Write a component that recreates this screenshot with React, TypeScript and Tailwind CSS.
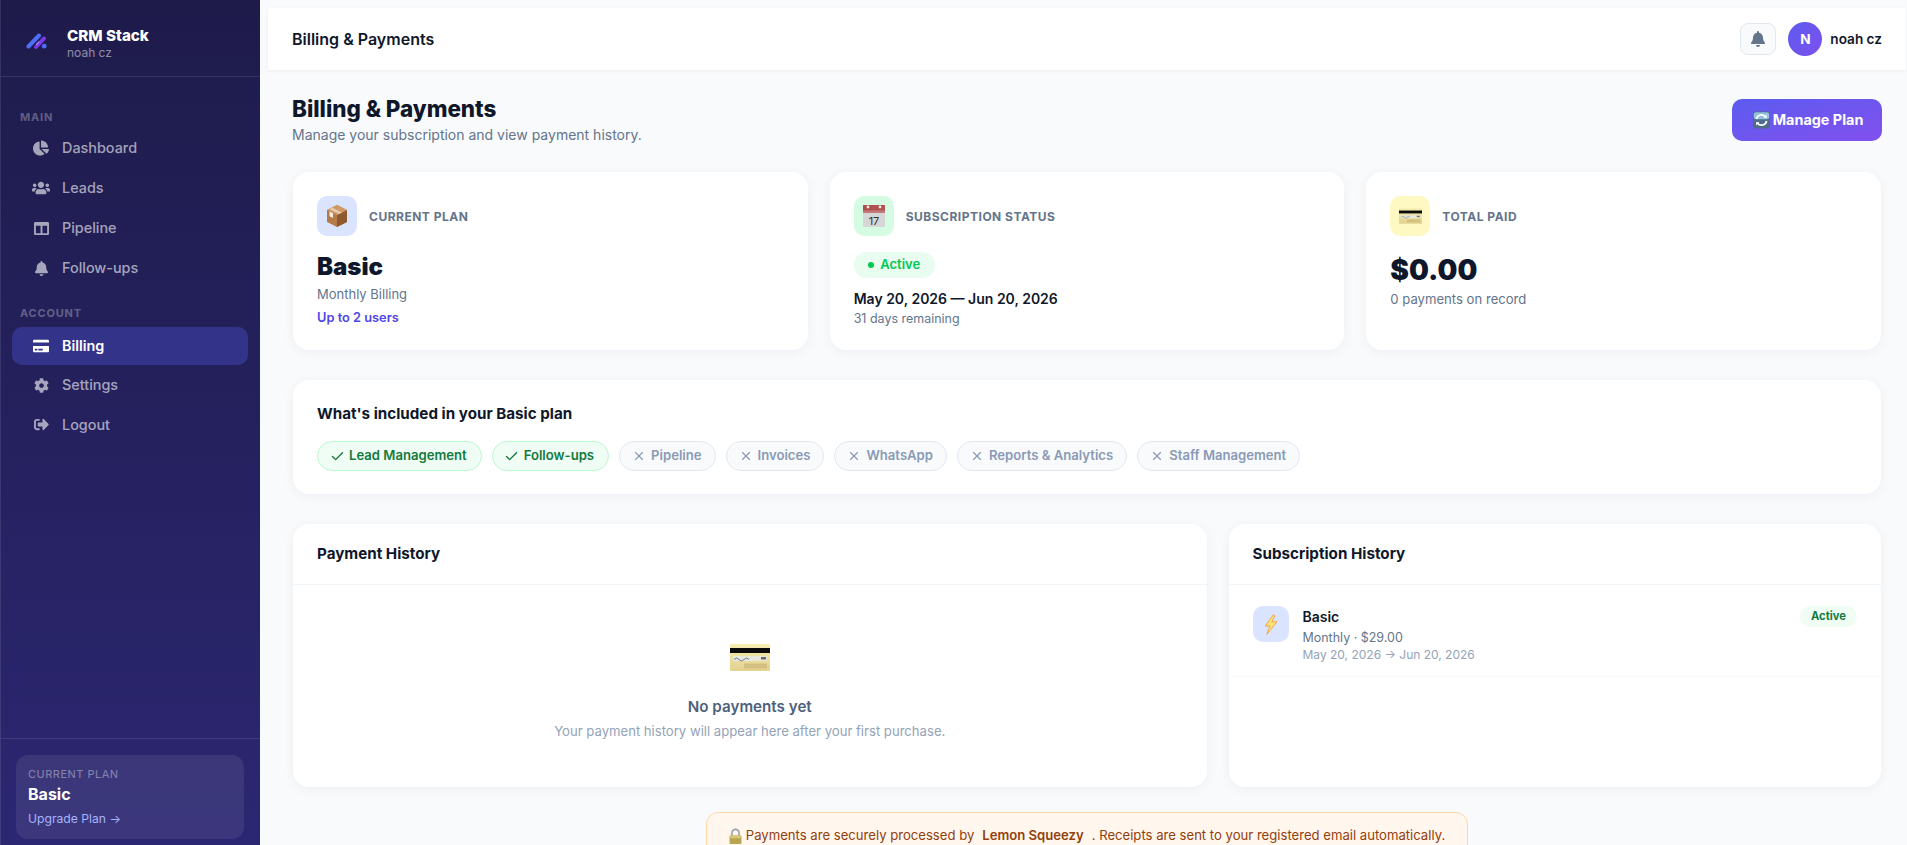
import React from "react";
import { Check, X } from "lucide-react";
import { FaChartPie, FaUsers, FaColumns, FaBell, FaCreditCard, FaCog, FaSignOutAlt } from "react-icons/fa";

const Logo = () => (
  <svg width="21" height="18" viewBox="0 0 21 18" className="shrink-0">
    <path d="M2.5 14.5 L13 3.5" stroke="#4f6ef7" strokeWidth="4" strokeLinecap="round" fill="none" />
    <path d="M10 15 L18 6.5" stroke="#7c3aed" strokeWidth="4" strokeLinecap="round" fill="none" />
    <path d="M10.5 12.5 L13 9.8" stroke="#a78bfa" strokeWidth="1.2" strokeLinecap="round" fill="none" />
    <circle cx="18.2" cy="14.2" r="2.4" fill="#4f6ef7" />
  </svg>
);

const PackageEmoji = () => (
  <svg width="22" height="24" viewBox="0 0 22 24">
    <path d="M11 1 L21 6 V18 L11 23 L1 18 V6 Z" fill="#b57a48" />
    <path d="M11 11 L21 6 V18 L11 23 Z" fill="#8f5a30" />
    <path d="M1 6 L11 1 L21 6 L11 11 Z" fill="#cf9a68" />
    <path d="M6 3.5 L16 8.5 L13 10 L3 5 Z" fill="#e5c9a8" />
    <path d="M3.5 7.5 L7 9.3 V14 L3.5 12.2 Z" fill="#f2ece2" />
  </svg>
);

const CalendarEmoji = () => (
  <svg width="22" height="24" viewBox="0 0 22 24">
    <rect x="0" y="8" width="22" height="15" fill="#d6d6d6" />
    <rect x="0" y="1" width="22" height="8" fill="#b0504f" />
    <rect x="0" y="6.5" width="22" height="2.5" fill="#c27a78" />
    <circle cx="5" cy="3" r="1.4" fill="#e8efe8" />
    <circle cx="17" cy="3" r="1.4" fill="#e8efe8" />
    <text x="11" y="20.5" textAnchor="middle" fontSize="11" fontFamily="Inter, sans-serif" fill="#333">17</text>
  </svg>
);

const CardEmoji = ({ w = 23, h = 16 }: { w?: number; h?: number }) => (
  <svg width={w} height={h} viewBox="0 0 40 27">
    <defs>
      <linearGradient id="cardg" x1="0" y1="0" x2="0" y2="1">
        <stop offset="0" stopColor="#f6eeb0" />
        <stop offset="1" stopColor="#e2d190" />
      </linearGradient>
    </defs>
    <rect x="0" y="0" width="40" height="27" rx="1.5" fill="url(#cardg)" />
    <rect x="0" y="4" width="40" height="5" fill="#0a0a0a" />
    <rect x="3" y="12" width="34" height="5" fill="#e9e6da" />
    <path d="M4 15.5 q3 -3 5 0 t5 0 t5 0" stroke="#5a73a8" strokeWidth="0.9" fill="none" />
    <rect x="31" y="13" width="5" height="2.5" fill="#6a6a6a" />
    <rect x="14" y="19.5" width="23" height="5" fill="#d3bf80" />
  </svg>
);

const BoltEmoji = () => (
  <svg width="14" height="21" viewBox="0 0 14 21">
    <path d="M9.5 0.6 L1.2 12 H5.8 L2.8 20.4 L13 7.8 H7.8 L11 2 Z" fill="#ffe27a" stroke="#f59f3a" strokeWidth="0.9" strokeLinejoin="round" />
  </svg>
);

const LockEmoji = () => (
  <svg width="13" height="17" viewBox="0 0 12 15" className="shrink-0">
    <path d="M2.7 7 V4.2 a3.3 3.3 0 0 1 6.6 0 V7" fill="none" stroke="#9aa0a6" strokeWidth="1.5" />
    <rect x="0.5" y="6.5" width="11" height="8" rx="1" fill="#b9a452" />
    <rect x="0.5" y="6.5" width="11" height="2.5" rx="1" fill="#d4c67c" />
  </svg>
);

const SyncEmoji = () => (
  <svg width="17" height="18" viewBox="0 0 17 18" className="shrink-0">
    <rect x="0" y="0.5" width="17" height="17" rx="2.5" fill="#4f6b8a" />
    <rect x="0.8" y="1.3" width="15.4" height="7" rx="2" fill="#8fc1dc" />
    <path d="M3.4 8 a5.2 5.2 0 0 1 9 -2.4" stroke="#fff" strokeWidth="1.7" fill="none" />
    <path d="M10.6 6.8 L14 7 L13.6 3.4 Z" fill="#fff" />
    <path d="M13.6 10 a5.2 5.2 0 0 1 -9 2.4" stroke="#fff" strokeWidth="1.7" fill="none" />
    <path d="M6.4 11.2 L3 11 L3.4 14.6 Z" fill="#fff" />
  </svg>
);

const NavItem = ({ icon, label, active }: { icon: React.ReactNode; label: string; active?: boolean }) => (
  <div className={`ml-[11px] mr-3 flex h-[38px] items-center rounded-[10px] pl-[18px] ${active ? "bg-[#34338a] text-white font-semibold" : "text-white/60 font-medium"}`}>
    <span className="flex w-[22px] justify-center">{icon}</span>
    <span className="ml-[10px] text-[14.4px]">{label}</span>
  </div>
);

const StatCard = ({ iconBg, icon, label, children }: { iconBg: string; icon: React.ReactNode; label: string; children: React.ReactNode }) => (
  <div className="h-[178px] rounded-2xl bg-white p-6 shadow-[0_2px_12px_rgba(15,23,42,0.05)]">
    <div className="flex items-center gap-3">
      <div className={`flex h-10 w-10 items-center justify-center rounded-[10px] ${iconBg}`}>{icon}</div>
      <div className="pt-px text-[12px] font-bold uppercase tracking-[0.5px] text-[#64748b]">{label}</div>
    </div>
    {children}
  </div>
);

const Chip = ({ on, label }: { on?: boolean; label: string }) => (
  <div className={`flex h-[30px] items-center rounded-full border text-[13.12px] font-semibold ${on ? "gap-[4.5px] border-[#bbf7d0] bg-[#f0fdf4] pr-[14px] pl-[11.5px] text-[#137a3c]" : "gap-[5px] border-[#e2e8f0] bg-[#f8fafc] pr-[13px] pl-[12px] text-[#8a9ab5]"}`}>
    {on ? <Check size={15} strokeWidth={2.2} /> : <X size={14} strokeWidth={2} />}
    <span>{label}</span>
  </div>
);

export default function App() {
  return (
    <div className="flex h-screen overflow-hidden bg-[#f8fafc] font-['Inter',sans-serif]">
      <aside className="flex h-full w-[260px] shrink-0 flex-col border-l border-white/10 bg-gradient-to-b from-[#1e1b4b] to-[#2c2772]">
        <div className="flex h-[77px] items-center gap-[20px] border-b border-white/10 pt-[6px] pl-[25px]">
          <Logo />
          <div className="pt-[5px]">
            <div className="text-[15.2px] leading-[18px] font-extrabold text-white">CRM Stack</div>
            <div className="text-[12px] leading-[15px] text-white/50">noah cz</div>
          </div>
        </div>
        <div className="mt-[33px] mb-[5px] pl-[19px] text-[11px] leading-[14px] font-bold tracking-[0.8px] text-white/30">MAIN</div>
        <div className="flex flex-col gap-[2px]">
          <NavItem icon={<FaChartPie size={16} />} label="Dashboard" />
          <NavItem icon={<FaUsers size={18} />} label="Leads" />
          <NavItem icon={<FaColumns size={15} />} label="Pipeline" />
          <NavItem icon={<FaBell size={15} />} label="Follow-ups" />
        </div>
        <div className="mt-[19px] mb-[6.5px] pl-[19px] text-[11px] leading-[14px] font-bold tracking-[0.8px] text-white/30">ACCOUNT</div>
        <div className="flex flex-col gap-[1.5px]">
          <NavItem active icon={<FaCreditCard size={16} />} label="Billing" />
          <NavItem icon={<FaCog size={15} />} label="Settings" />
          <NavItem icon={<FaSignOutAlt size={15} />} label="Logout" />
        </div>
        <div className="mt-auto border-t border-white/10 pt-[16px] pr-[16px] pb-[6px] pl-[15px]">
          <div className="h-[84px] rounded-xl bg-white/[0.08] px-3 pt-[12px]">
            <div className="text-[11px] leading-[14px] tracking-[0.5px] text-white/40">CURRENT PLAN</div>
            <div className="mt-[2px] text-[16px] leading-[22px] font-bold text-white">Basic</div>
            <div className="mt-[6px] text-[12.16px] leading-[16px] text-[#a5b4fc]">Upgrade Plan →</div>
          </div>
        </div>
      </aside>

      <main className="flex min-w-0 flex-1 flex-col pt-2 pr-px pl-2">
        <header className="flex h-[62px] shrink-0 items-center justify-between bg-white pr-[24px] pl-[24px] shadow-[0_1px_4px_rgba(15,23,42,0.06)]">
          <div className="text-[16px] font-semibold text-[#0f172a]">Billing &amp; Payments</div>
          <div className="flex items-center">
            <div className="flex h-[32px] w-[36px] items-center justify-center rounded-lg border border-[#e2e8f0] bg-[#f8fafc] text-[16px] text-[#64748b]">
              <FaBell />
            </div>
            <div className="ml-3 flex h-[34px] w-[34px] items-center justify-center rounded-full bg-gradient-to-br from-[#5b5bef] to-[#7c50ee] text-[13.6px] font-bold text-white">N</div>
            <div className="ml-[8px] text-[13.6px] font-semibold text-[#0f172a]">noah cz</div>
          </div>
        </header>

        <div className="px-6 pt-[24px]">
          <div className="flex items-start justify-between">
            <div>
              <h1 className="text-[22.4px] leading-[30px] font-extrabold text-[#0f172a]">Billing &amp; Payments</h1>
              <p className="mt-[1px] text-[14px] leading-[20px] text-[#64748b]">Manage your subscription and view payment history.</p>
            </div>
            <button className="mt-[5px] flex h-[42px] w-[150px] items-center justify-center gap-[1px] rounded-[10px] bg-gradient-to-br from-[#5b5bef] to-[#8150ee] pl-[2px] text-[14.4px] font-bold text-white">
              <SyncEmoji />
              <span className="ml-[2px]">Manage Plan</span>
            </button>
          </div>

          <div className="mx-px mt-[27px] grid grid-cols-3 gap-[22px]">
            <StatCard iconBg="bg-[#dbe4ff]" icon={<PackageEmoji />} label="Current Plan">
              <div className="mt-[14px] text-[24px] leading-[34px] font-black text-[#0f172a]">Basic</div>
              <div className="text-[13px] leading-[20px] text-[#64748b]">Monthly Billing</div>
              <div className="mt-[4px] text-[12.8px] leading-[20px] font-semibold text-[#4f46e5]">Up to 2 users</div>
            </StatCard>
            <StatCard iconBg="bg-[#d5fbe3]" icon={<CalendarEmoji />} label="Subscription Status">
              <div className="mt-[16px] flex h-[26px] w-[81px] items-center justify-center gap-[6px] rounded-full bg-[#e8fcef] text-[13px] font-semibold text-[#00c853]">
                <span className="h-[6px] w-[6px] rounded-full bg-[#00c853]" />
                Active
              </div>
              <div className="mt-[11px] text-[14px] leading-[20px] font-semibold text-[#0f172a]">May 20, 2026 — Jun 20, 2026</div>
              <div className="text-[12.48px] leading-[20px] text-[#64748b]">31 days remaining</div>
            </StatCard>
            <StatCard iconBg="bg-[#fef9c3]" icon={<CardEmoji />} label="Total Paid">
              <div className="mt-[16px] text-[28px] leading-[36px] font-black text-[#0f172a]">$0.00</div>
              <div className="mt-[1px] text-[13.12px] leading-[20px] text-[#64748b]">0 payments on record</div>
            </StatCard>
          </div>

          <div className="mx-px mt-[30px] h-[114px] rounded-2xl bg-white px-6 pt-[25px] shadow-[0_2px_12px_rgba(15,23,42,0.05)]">
            <div className="text-[15.2px] leading-[18px] font-bold text-[#0f172a]">What's included in your Basic plan</div>
            <div className="mt-[18px] flex gap-[10px]">
              <Chip on label="Lead Management" />
              <Chip on label="Follow-ups" />
              <Chip label="Pipeline" />
              <Chip label="Invoices" />
              <Chip label="WhatsApp" />
              <Chip label="Reports & Analytics" />
              <Chip label="Staff Management" />
            </div>
          </div>

          <div className="mx-px mt-[30px] grid grid-cols-[1.4fr_1fr] gap-[22px]">
            <div className="h-[263px] rounded-2xl bg-white shadow-[0_2px_12px_rgba(15,23,42,0.05)]">
              <div className="flex h-[61px] items-center border-b border-[#f1f5f9] px-6 text-[15.2px] font-bold text-[#0f172a]">Payment History</div>
              <div className="flex flex-col items-center pt-[59px]">
                <CardEmoji w={40} h={27} />
                <div className="mt-[26px] text-[15.2px] leading-[20px] font-semibold text-[#4f5f7c]">No payments yet</div>
                <div className="mt-[4px] text-[13.12px] leading-[20px] text-[#94a3b8]">Your payment history will appear here after your first purchase.</div>
              </div>
            </div>
            <div className="h-[263px] rounded-2xl bg-white shadow-[0_2px_12px_rgba(15,23,42,0.05)]">
              <div className="flex h-[61px] items-center border-b border-[#f1f5f9] px-6 text-[15.2px] font-bold text-[#0f172a]">Subscription History</div>
              <div className="flex h-[92px] items-start border-b border-[#f8fafc] px-6 pt-[21px]">
                <div className="flex h-9 w-9 items-center justify-center rounded-[10px] bg-[#dbe4ff]"><BoltEmoji /></div>
                <div className="ml-[14px] flex-1">
                  <div className="mt-px text-[14px] leading-[20px] font-semibold text-[#0f172a]">Basic</div>
                  <div className="mt-[2px] text-[12.48px] leading-[18px] text-[#64748b]">Monthly · $29.00</div>
                  <div className="-mt-px text-[12px] leading-[17px] text-[#94a3b8]">May 20, 2026 → Jun 20, 2026</div>
                </div>
                <div className="flex h-[21px] w-[57px] items-center justify-center rounded-full bg-[#f0fdf4] text-[11.2px] font-bold text-[#137a3c]">Active</div>
              </div>
            </div>
          </div>

          <div className="mx-auto mt-[25px] flex h-[48px] w-[762px] items-center justify-center rounded-xl border border-[#fed7aa] bg-[#fff7ed] text-[13.12px] text-[#92400e]">
            <LockEmoji />
            <span className="ml-1">Payments are securely processed by</span>
            <span className="mx-2 font-semibold">Lemon Squeezy</span>
            <span>. Receipts are sent to your registered email automatically.</span>
          </div>
        </div>
      </main>
    </div>
  );
}
